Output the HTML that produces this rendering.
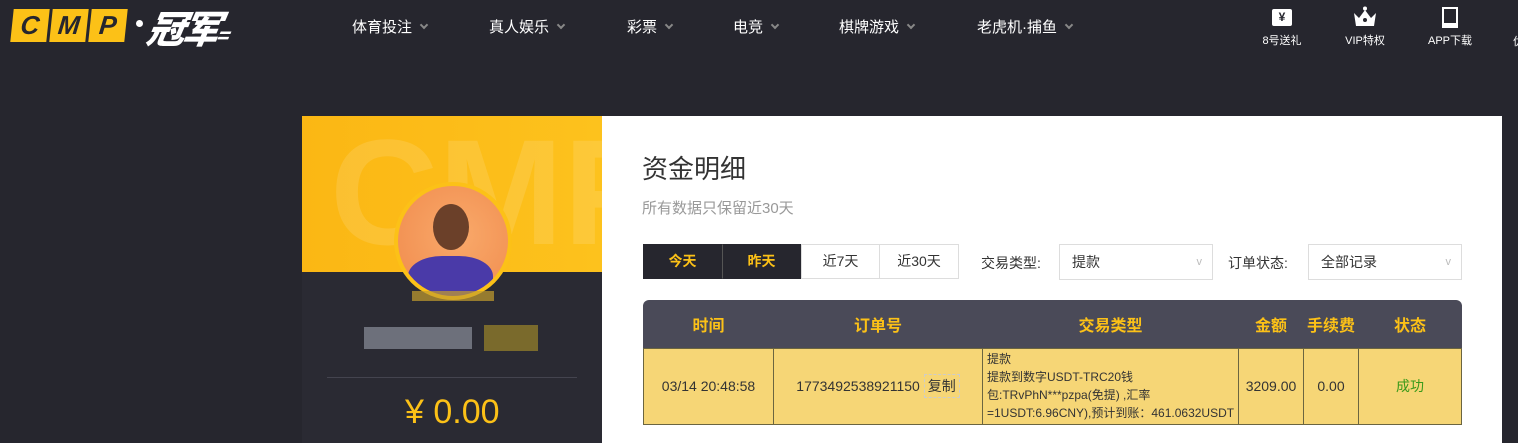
<!DOCTYPE html>
<html><head><meta charset="utf-8"><style>
*{margin:0;padding:0;box-sizing:border-box}
body{width:1518px;height:443px;overflow:hidden;background:#26262e;font-family:"Liberation Sans","Noto Sans CJK SC",sans-serif;position:relative}
.a{position:absolute}
.nav{color:#fff;font-size:15px;top:16px}
.nav i{display:inline-block;width:6px;height:6px;border-right:2px solid #888;border-bottom:2px solid #888;transform:rotate(45deg);margin-left:9px;position:relative;top:-4px}
.ic{color:#fff;font-size:11px;text-align:center;top:6px;width:60px}
.logo b{position:absolute;top:0;width:36px;height:33px;background:#fcc117;color:#26262e;font:italic 900 26px "Liberation Sans",sans-serif;text-align:center;line-height:33px;transform:skewX(-6deg)}
.btn{top:244px;height:35px;width:79px;border:1px solid #ddd;font-size:14px;text-align:center;line-height:33px;color:#333}
.sel{top:244px;height:36px;border:1px solid #ddd;font-size:14px;line-height:34px;padding-left:12px;color:#333}
.sel:after{content:"v";position:absolute;right:10px;color:#bbb;font-size:11px}
table{border-collapse:collapse;position:absolute;left:643px;top:300px;width:819px;font-size:14px;color:#333}
th{color:#fcc117;font-size:16px;height:48px}
td{background:#f6d676;border:1px solid #6b6540;text-align:center;height:76px}
</style></head><body>
<div class="a logo" style="left:12px;top:9px"><b style="left:0">C</b><b style="left:39px">M</b><b style="left:78px">P</b></div>
<div class="a" style="left:136px;top:20px;width:7px;height:7px;border-radius:50%;background:#fff"></div>
<div class="a" style="left:148px;top:-1px;color:#fff;font:italic 900 38px 'Noto Sans CJK SC',sans-serif;letter-spacing:-3px;transform:skewX(-10deg)">冠军<span style="font-size:20px">=</span></div>
<div class="a nav" style="left:352px">体育投注<i></i></div>
<div class="a nav" style="left:489px">真人娱乐<i></i></div>
<div class="a nav" style="left:627px">彩票<i></i></div>
<div class="a nav" style="left:733px">电竞<i></i></div>
<div class="a nav" style="left:839px">棋牌游戏<i></i></div>
<div class="a nav" style="left:977px">老虎机·捕鱼<i></i></div>
<div class="a ic" style="left:1252px"><div style="width:20px;height:17px;background:#fff;margin:3px auto 6px;color:#26262e;font-size:12px;line-height:17px;font-weight:bold;border-radius:2px">¥</div>8号送礼</div>
<div class="a ic" style="left:1335px"><svg width="26" height="22" viewBox="0 0 26 22" style="display:block;margin:0 auto 4px"><circle cx="13" cy="2.5" r="2" fill="#fff"/><path d="M2 7 L7 12 L13 4 L19 12 L24 7 L22 20 L4 20 Z" fill="#fff"/><circle cx="13" cy="14" r="2" fill="#26262e"/></svg>VIP特权</div>
<div class="a ic" style="left:1420px"><div style="width:16px;height:21px;border:2px solid #fff;border-bottom-width:5px;margin:1px auto 4px"></div>APP下载</div>
<div class="a" style="left:1513px;top:33px;color:#fff;font-size:11px">优</div>
<div class="a" style="left:302px;top:116px;width:300px;height:327px;background:#2a2a33"></div>
<div class="a" style="left:302px;top:116px;width:300px;height:156px;background:linear-gradient(90deg,#fbb714,#fdc21d);overflow:hidden"><div style="position:absolute;left:28px;top:-10px;font:bold 150px 'Liberation Sans',sans-serif;color:rgba(255,255,255,.12)">CMP</div></div>
<div class="a" style="left:394px;top:182px;width:118px;height:118px;border-radius:50%;background:#fcc117"></div>
<div class="a" style="left:398px;top:186px;width:110px;height:110px;border-radius:50%;background:radial-gradient(circle at 55% 45%,#f9a96a,#f08a4c);overflow:hidden"><div style="position:absolute;left:35px;top:18px;width:36px;height:46px;border-radius:50%;background:#6b4029"></div><div style="position:absolute;left:10px;top:70px;width:85px;height:50px;border-radius:40% 40% 0 0;background:#4a3aa8"></div></div>
<div class="a" style="left:412px;top:291px;width:82px;height:10px;background:#c59e2e;opacity:.7"></div>
<div class="a" style="left:364px;top:327px;width:108px;height:22px;background:#8a8f9a;opacity:.7"></div>
<div class="a" style="left:484px;top:325px;width:54px;height:26px;background:#7a6a2c"></div>
<div class="a" style="left:327px;top:377px;width:250px;height:1px;background:#44444f"></div>
<div class="a" style="left:405px;top:393px;color:#fcc117;font-size:34px">¥ 0.00</div>
<div class="a" style="left:602px;top:116px;width:900px;height:327px;background:#fff"></div>
<div class="a" style="left:642px;top:149px;font-size:26px;color:#333">资金明细</div>
<div class="a" style="left:642px;top:197px;font-size:15px;color:#999">所有数据只保留近30天</div>
<div class="a btn" style="left:643px;background:#26262e;color:#fcc117;font-weight:bold;border-color:#26262e">今天</div>
<div class="a btn" style="left:722px;background:#26262e;color:#fcc117;font-weight:bold;border-color:#26262e;border-left:1px solid #555">昨天</div>
<div class="a btn" style="left:801px">近7天</div>
<div class="a btn" style="left:880px;border-left:none">近30天</div>
<div class="a" style="left:981px;top:253px;font-size:14px;color:#333">交易类型:</div>
<div class="a sel" style="left:1059px;width:154px">提款</div>
<div class="a" style="left:1228px;top:253px;font-size:14px;color:#333">订单状态:</div>
<div class="a sel" style="left:1308px;width:154px">全部记录</div>
<div class="a" style="left:643px;top:300px;width:819px;height:48px;background:#4a4a58;border-radius:6px 6px 0 0"></div>
<table><tr><th style="width:130px">时间</th><th style="width:209px">订单号</th><th style="width:256px">交易类型</th><th style="width:65px">金额</th><th style="width:55px">手续费</th><th>状态</th></tr>
<tr><td>03/14 20:48:58</td><td>1773492538921150 <span style="border:1px dashed #ccc;padding:3px 3px">复制</span></td><td style="text-align:left;font-size:12px;line-height:18px;padding-left:4px">提款<br>提款到数字USDT-TRC20钱<br>包:TRvPhN***pzpa(免提) ,汇率<br>=1USDT:6.96CNY),预计到账：461.0632USDT</td><td>3209.00</td><td>0.00</td><td style="color:#3a9a1a">成功</td></tr></table>
</body></html>
